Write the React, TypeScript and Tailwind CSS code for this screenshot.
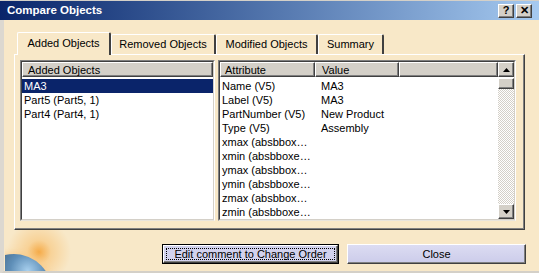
const font = { fontFamily: '"Liberation Sans", Arial, sans-serif' }

const attrs: [string, string][] = [
  ['Name (V5)', 'MA3'],
  ['Label (V5)', 'MA3'],
  ['PartNumber (V5)', 'New Product'],
  ['Type (V5)', 'Assembly'],
  ['xmax (absbbox…', ''],
  ['xmin (absbboxe…', ''],
  ['ymax (absbbox…', ''],
  ['ymin (absbboxe…', ''],
  ['zmax (absbbox…', ''],
  ['zmin (absbboxe…', ''],
]

function TitleButton({ children }: { children: string }) {
  return (
    <div className="flex h-[14px] w-[16px] items-center justify-center border-t border-l border-t-white border-l-white border-r border-b border-r-[#404040] border-b-[#404040] bg-[#d4d0c8] text-[11px] leading-none font-bold text-black shadow-[inset_-1px_-1px_0_#808080]">
      {children}
    </div>
  )
}

function Tab({ label, width, active }: { label: string; width: string; active?: boolean }) {
  return (
    <div
      className={`flex items-center justify-center rounded-t-[2px] border-t border-l border-t-white border-l-white border-r-2 border-r-[#404040] bg-[#f8e8c8] text-[11px] text-black ${width} ${
        active ? 'relative z-10 -mb-px h-[23px] pb-[1px]' : 'h-[20px]'
      }`}
    >
      {label}
    </div>
  )
}

function Sunken({ className, children }: { className: string; children: React.ReactNode }) {
  return (
    <div className={`flex border-t border-l border-t-[#808080] border-l-[#808080] border-r border-b border-r-white border-b-[#e8e4dc] ${className}`}>
      <div className="flex flex-1 border-t border-l border-t-[#404040] border-l-[#404040] border-r border-b border-r-[#d4d0c8] border-b-[#d4d0c8] bg-white">
        {children}
      </div>
    </div>
  )
}

function HeaderCell({ label, className }: { label: string; className: string }) {
  return (
    <div className={`flex h-[15px] items-center border-t border-l border-t-white border-l-white border-r border-b border-r-[#404040] border-b-[#404040] bg-[#d4d0c8] pt-[1px] text-[11px] text-black shadow-[inset_-1px_-1px_0_#808080] ${className}`}>
      {label}
    </div>
  )
}

function ScrollButton({ up }: { up?: boolean }) {
  return (
    <div className="flex h-[15px] w-[16px] items-center justify-center border-t border-l border-t-white border-l-white border-r border-b border-r-[#404040] border-b-[#404040] bg-[#d4d0c8] shadow-[inset_-1px_-1px_0_#808080]">
      <svg width="7" height="4" viewBox="0 0 7 4">
        {up ? <path d="M3.5 0 L7 4 L0 4 Z" fill="#000" /> : <path d="M0 0 L7 0 L3.5 4 Z" fill="#000" />}
      </svg>
    </div>
  )
}

// the blurred sun + planet at the lower left of the dialog
function Planet() {
  return (
    <div className="-ml-[9px] h-[41px] w-[70px] shrink-0 overflow-hidden bg-[radial-gradient(circle_at_34px_22px,rgba(245,168,66,0.95)_0px,rgba(248,196,120,0.6)_12px,rgba(248,232,200,0)_32px)]">
      <div className="mt-[24px] -ml-[29px] h-[76px] w-[76px] rounded-full bg-[#34536f] bg-[radial-gradient(circle_at_68%_22%,#a8d0ee_0%,#5f8fb8_22%,#3a5a78_50%,#2a3f58_100%)] shadow-[0_0_6px_2px_rgba(250,200,130,0.6)]" />
    </div>
  )
}

export default function App() {
  return (
    <div style={font} className="flex h-[273px] w-[539px] flex-col overflow-hidden bg-[#f8e8c8]">
      {/* title bar */}
      <div className="flex h-[20px] shrink-0 items-center border-t border-t-[#d4d0c8] bg-gradient-to-r from-[#0a246a] to-[#a6caf0] pr-[7px] pl-[7px]">
        <span className="text-[11.5px] font-bold text-white">Compare Objects</span>
        <div className="ml-auto flex gap-[2px]">
          <TitleButton>?</TitleButton>
          <TitleButton>✕</TitleButton>
        </div>
      </div>

      {/* body */}
      <div className="flex flex-1 flex-col border-l-4 border-b-[3px] border-l-[#dcd8d0] border-b-[#d4d0c8] pr-[14px] pl-[10px]">
        <div className="mt-[12px] ml-[3px] flex items-end">
          <Tab label="Added Objects" width="w-[94px]" active />
          <Tab label="Removed Objects" width="w-[105px]" />
          <Tab label="Modified Objects" width="w-[102px]" />
          <Tab label="Summary" width="w-[66px]" />
        </div>

        <div className="flex h-[176px] shrink-0 gap-[3px] border-t border-r border-b border-l border-t-white border-r-[#404040] border-b-[#404040] border-l-white pt-[5px] pr-[8px] pb-[8px] pl-[5px] shadow-[inset_-1px_-1px_0_#808080]">
          {/* added objects list */}
          <Sunken className="w-[195px]">
            <div className="flex flex-1 flex-col">
              <HeaderCell label="Added Objects" className="pl-[5px]" />
              <div className="mt-[2px] flex h-[14px] items-center bg-[#0a246a] pl-[2px] text-[11px] text-white">MA3</div>
              <div className="flex h-[14px] items-center pl-[2px] text-[11px] text-black">Part5 (Part5, 1)</div>
              <div className="flex h-[14px] items-center pl-[2px] text-[11px] text-black">Part4 (Part4, 1)</div>
            </div>
          </Sunken>

          {/* attributes list */}
          <Sunken className="flex-1">
            <div className="flex flex-1 flex-col">
              <div className="flex">
                <HeaderCell label="Attribute" className="w-[95px] pl-[4px]" />
                <HeaderCell label="Value" className="w-[84px] pl-[6px]" />
                <HeaderCell label="" className="flex-1" />
              </div>
              <div className="mt-[2px] flex flex-col">
                {attrs.map(([a, v]) => (
                  <div key={a} className="flex h-[14px] items-center text-[11px] text-black">
                    <span className="w-[95px] truncate pl-[2px]">{a}</span>
                    <span className="pl-[6px]">{v}</span>
                  </div>
                ))}
              </div>
            </div>
            <div className="flex w-[16px] flex-col">
              <ScrollButton up />
              <div className="mt-[1px] h-[11px] w-[16px] border-t border-r border-b border-l border-t-white border-r-[#404040] border-b-[#404040] border-l-white bg-[#d4d0c8] shadow-[inset_-1px_-1px_0_#808080]" />
              <div className="flex-1 bg-[image:repeating-conic-gradient(#d4d0c8_0_25%,#ffffff_0_50%)] bg-size-[2px_2px]" />
              <ScrollButton />
            </div>
          </Sunken>
        </div>

        {/* bottom row: decoration + buttons */}
        <div className="-mr-px flex flex-1 items-start">
          <Planet />
          <div className="mt-[14px] ml-auto flex gap-[8px]">
            <div className="flex h-[20px] w-[177px] border border-black">
              <div className="flex flex-1 border-t border-r border-b border-l border-t-white border-r-[#404040] border-b-[#404040] border-l-white bg-[#d2d2ee] p-[2px] shadow-[inset_-1px_-1px_0_#808080]">
                <div className="flex flex-1 items-center justify-center border border-dotted border-black text-[11px] text-black">
                  Edit comment to Change Order
                </div>
              </div>
            </div>
            <div className="flex h-[20px] w-[179px] items-center justify-center border-t border-r border-b border-l border-t-white border-r-[#404040] border-b-[#404040] border-l-white bg-gradient-to-b from-[#dcdcf2] to-[#ccccea] text-[11px] text-black shadow-[inset_-1px_-1px_0_#808080]">
              Close
            </div>
          </div>
        </div>
      </div>
    </div>
  )
}
